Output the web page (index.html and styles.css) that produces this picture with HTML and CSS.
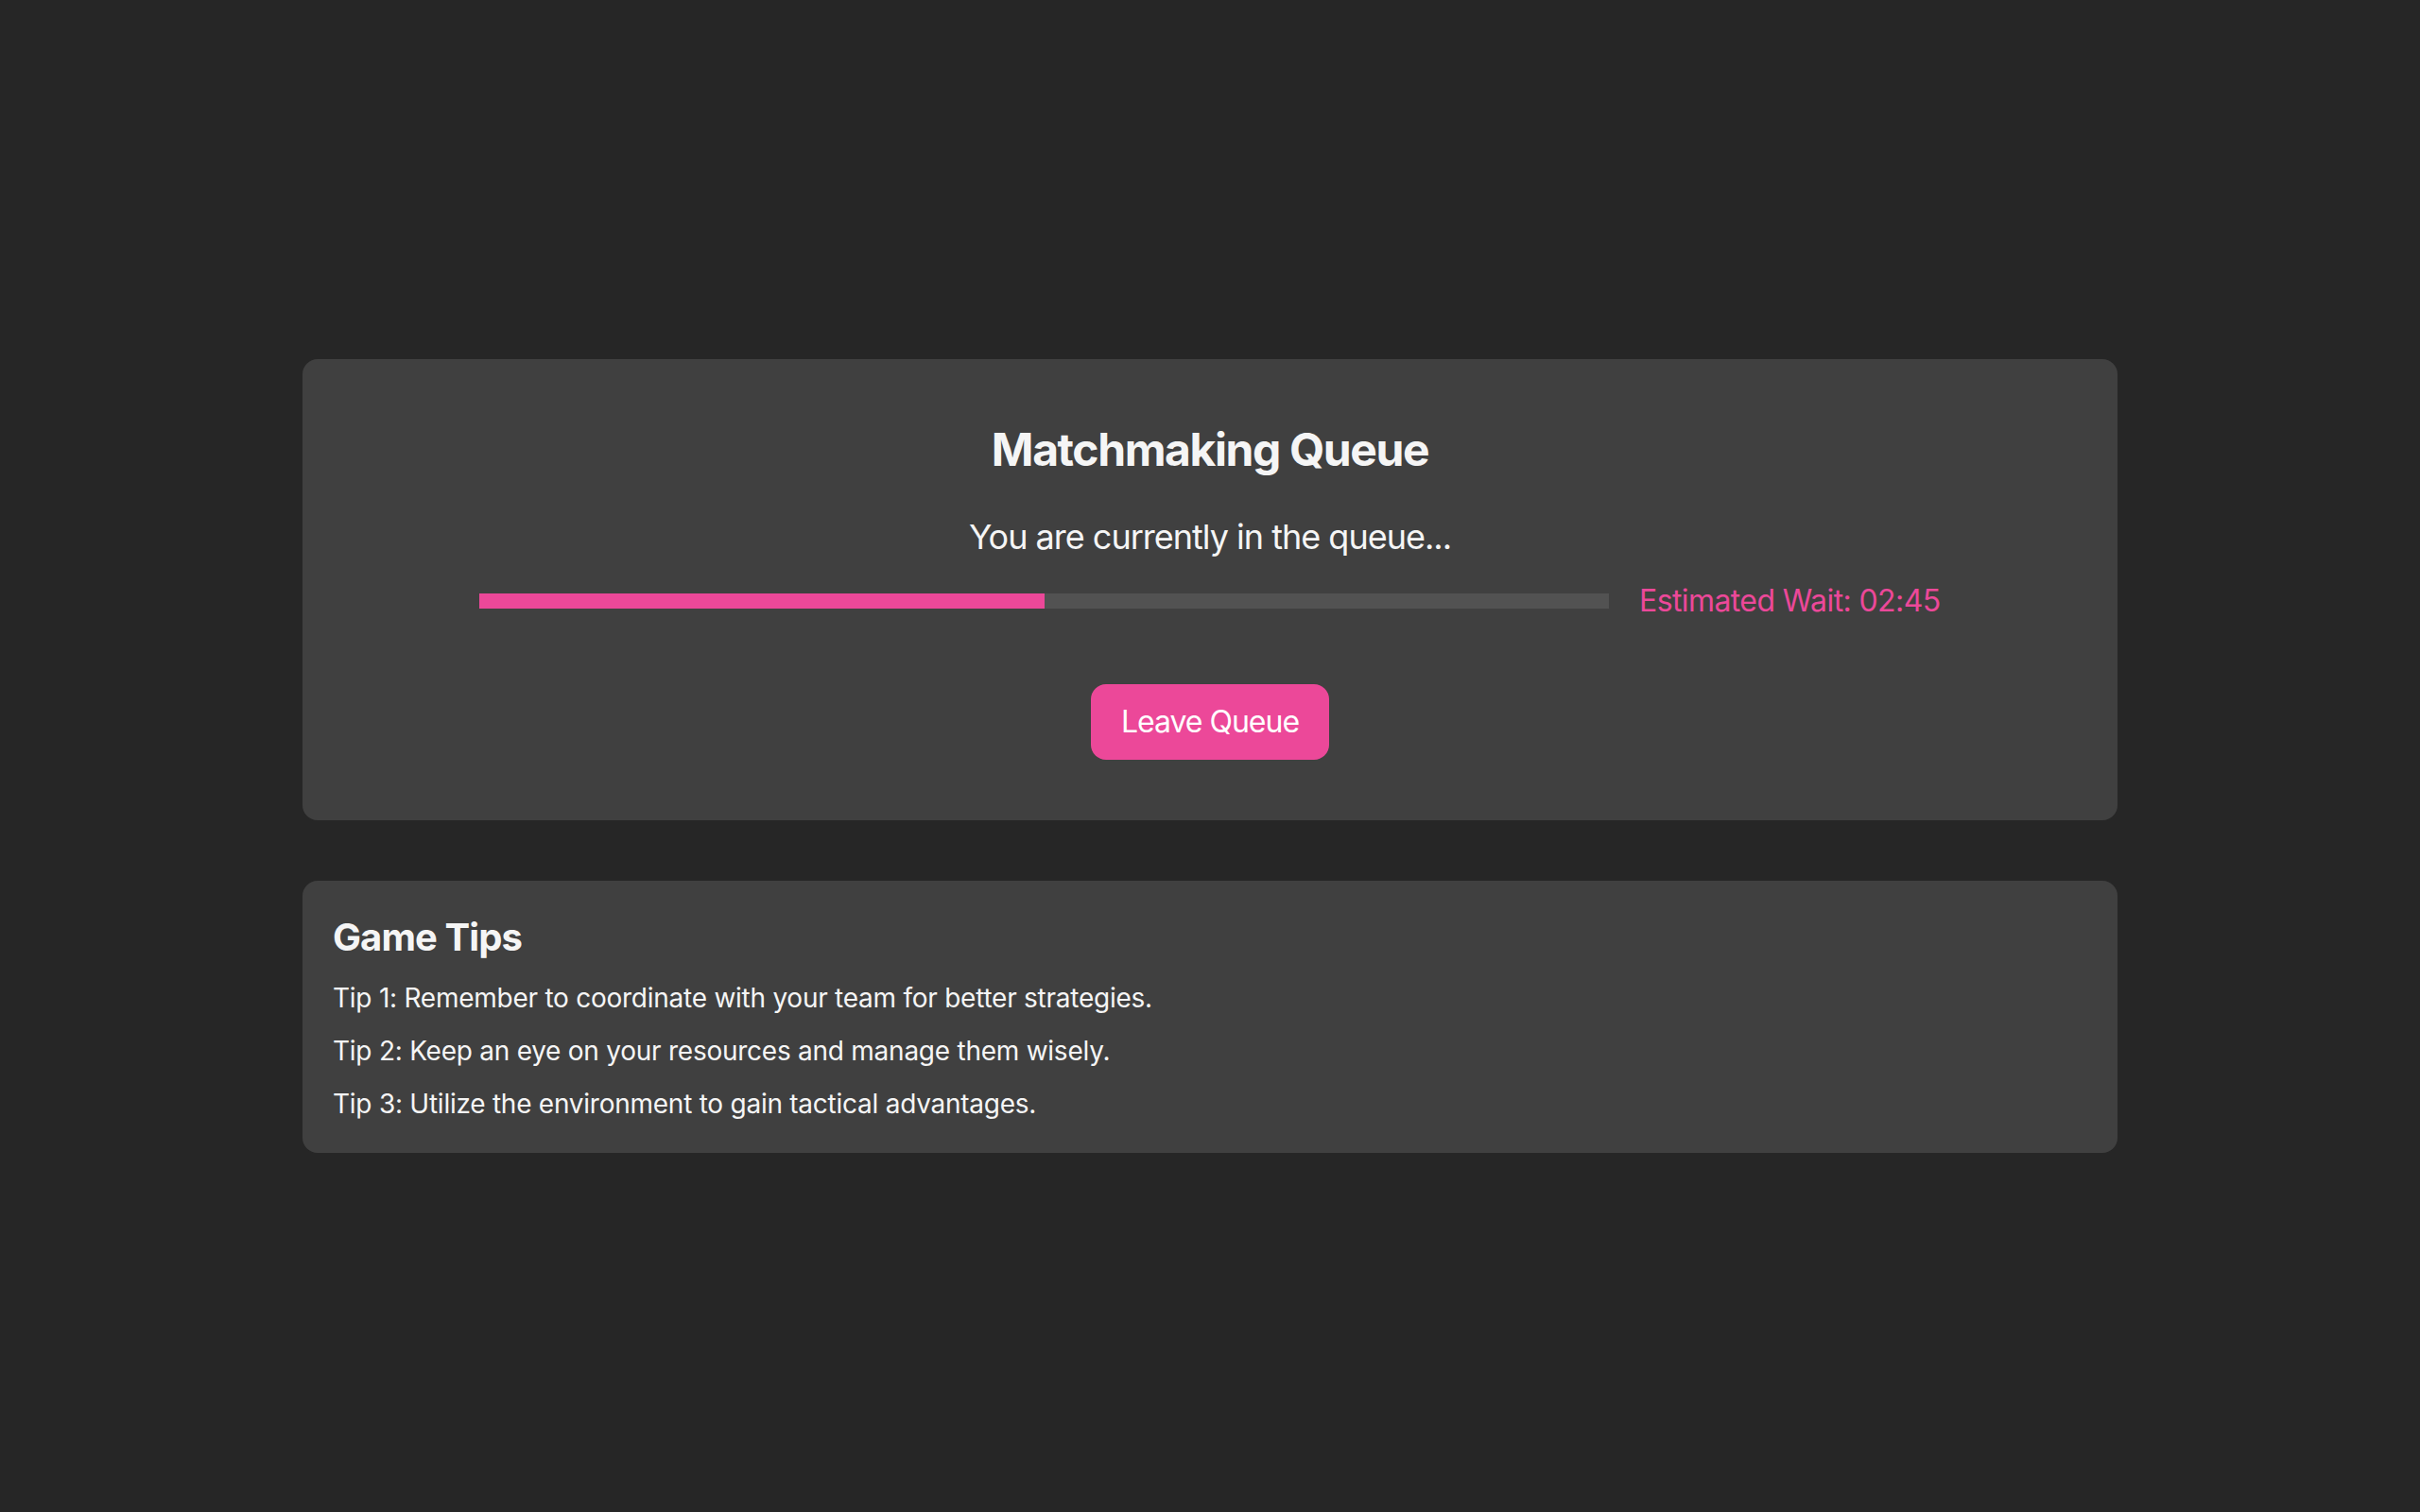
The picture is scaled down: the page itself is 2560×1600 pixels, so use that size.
FILE: index.html
```html
<!DOCTYPE html>
<html lang="en">
<head>
    <meta charset="UTF-8">
    <meta name="viewport" content="width=device-width, initial-scale=1.0">
    <title>Matchmaking Queue</title>
    <link rel="stylesheet" href="styles.css">
</head>
<body>
    <main class="wrapper">
        <section class="card queue">
            <h1 class="queue-title">Matchmaking Queue</h1>
            <p class="queue-status">You are currently in the queue...</p>
            <div class="progress-row">
                <div class="progress">
                    <div class="progress-fill" style="width: 50%;"></div>
                </div>
                <span class="wait">Estimated Wait: 02:45</span>
            </div>
            <button class="leave-btn" id="leave">Leave Queue</button>
        </section>

        <section class="card tips">
            <h2 class="tips-title">Game Tips</h2>
            <p class="tip">Tip 1: Remember to coordinate with your team for better strategies.</p>
            <p class="tip">Tip 2: Keep an eye on your resources and manage them wisely.</p>
            <p class="tip">Tip 3: Utilize the environment to gain tactical advantages.</p>
        </section>
    </main>
</body>
</html>
```

FILE: styles.css
```css
/* Page */
body {
    font-family: Inter, "Noto Sans", sans-serif;
    background-color: #262626;
    color: #f5f5f5;
    margin: 0;
    min-height: 100vh;
    display: flex;
    justify-content: center;
    align-items: center;
}

.wrapper {
    width: 1920px;
    display: flex;
    flex-direction: column;
    gap: 64px;
}

.card {
    background-color: #404040;
    border-radius: 16px;
}

/* Queue card */
.queue {
    padding: 64px;
    display: flex;
    flex-direction: column;
    align-items: center;
    text-align: center;
}

.queue-title {
    font-size: 48px;
    line-height: 64px;
    font-weight: 700;
    letter-spacing: -1.4px;
    margin: 0 0 32px;
}

.queue-status {
    font-size: 36px;
    line-height: 56px;
    letter-spacing: -1px;
    margin: 0 0 16px;
}

.progress-row {
    width: 100%;
    display: flex;
    justify-content: center;
    align-items: center;
    gap: 32px;
}

.progress {
    width: 66.6667%;
    height: 16px;
    background-color: #525252;
}

.progress-fill {
    height: 100%;
    background-color: #ec4899;
}

.wait {
    font-size: 32px;
    line-height: 48px;
    letter-spacing: -0.6px;
    color: #ec4899;
    white-space: nowrap;
}

.leave-btn {
    margin-top: 64px;
    font-family: inherit;
    font-size: 32px;
    line-height: 48px;
    letter-spacing: -1px;
    padding: 16px 32px;
    color: #fff;
    background-color: #ec4899;
    border: none;
    border-radius: 16px;
    cursor: pointer;
}

.leave-btn:hover {
    background-color: #db2777;
}

/* Tips card */
.tips {
    padding: 32px;
}

.tips-title {
    font-size: 40px;
    line-height: 56px;
    font-weight: 700;
    letter-spacing: -0.9px;
    margin: 0 0 16px;
}

.tip {
    font-size: 28px;
    line-height: 40px;
    letter-spacing: -0.25px;
    margin: 0 0 16px;
}

.tip:last-child {
    margin-bottom: 0;
}
```
